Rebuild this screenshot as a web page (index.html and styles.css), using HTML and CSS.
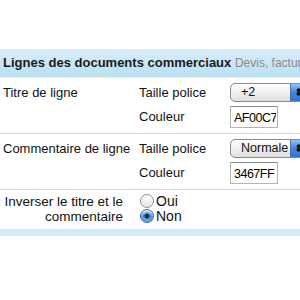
FILE: index.html
```html
<!DOCTYPE html>
<html lang="fr">
<head>
  <meta charset="UTF-8" />
  <title>Lignes des documents commerciaux</title>
  <link rel="stylesheet" href="styles.css">
</head>
<body>
  <div class="panel">
    <div class="panel-head">
      <span class="head-title">Lignes des documents commerciaux</span>
      <span class="head-sub">Devis, factures, bons de commande</span>
    </div>

    <div class="row">
      <div class="label">Titre de ligne</div>
      <div class="fields">
        <div class="field">
          <span class="field-name">Taille police</span>
          <div class="select"><span class="select-value">+2</span><span class="select-arrow">⬍</span></div>
        </div>
        <div class="field">
          <span class="field-name">Couleur</span>
          <input class="color-input" type="text" value="AF00C7">
        </div>
      </div>
    </div>

    <div class="row">
      <div class="label">Commentaire de ligne</div>
      <div class="fields">
        <div class="field">
          <span class="field-name">Taille police</span>
          <div class="select"><span class="select-value">Normale</span><span class="select-arrow">⬍</span></div>
        </div>
        <div class="field">
          <span class="field-name">Couleur</span>
          <input class="color-input" type="text" value="3467FF">
        </div>
      </div>
    </div>

    <div class="row row-last">
      <div class="label label-right">Inverser le titre et le commentaire</div>
      <div class="radios">
        <label class="radio"><span class="radio-dot"></span>Oui</label>
        <label class="radio"><span class="radio-dot checked"></span>Non</label>
      </div>
    </div>

    <div class="panel-foot"></div>
  </div>
</body>
</html>
```

FILE: styles.css
```css
body {
  margin: 0;
  background: #fff;
  font-family: "Liberation Sans", Arial, sans-serif;
  font-size: 13px;
  color: #111;
  overflow: hidden;
}

.panel {
  padding-top: 49px;
  width: 300px;
}

.panel-head {
  height: 28px;
  line-height: 28px;
  padding-left: 3px;
  white-space: nowrap;
  overflow: hidden;
  background: linear-gradient(#d9effa, #b8dff2);
  border-bottom: 1px solid #e4f1f8;
}

.head-title {
  font-weight: bold;
  font-size: 13px;
  color: #1a1a1a;
}

.head-sub {
  font-size: 12px;
  color: #8a8a8a;
}

.row {
  display: flex;
  border-bottom: 1px solid #dcdcdc;
  padding: 4px 0 6px;
}

.row-last {
  border-bottom: none;
  padding: 2px 0 5px;
}

.label {
  width: 139px;
  flex-shrink: 0;
  padding-left: 3px;
  box-sizing: border-box;
  line-height: 15px;
  padding-top: 3px;
  white-space: nowrap;
}

.label-right {
  width: 123px;
  margin-right: 17px;
  padding-left: 0;
  padding-top: 2px;
  text-align: right;
  white-space: normal;
  font-size: 13.5px;
}

.fields {
  display: flex;
  flex-direction: column;
  gap: 3px;
}

.field {
  display: flex;
  align-items: center;
  height: 21px;
}

.field-name {
  width: 91px;
}

.select {
  display: flex;
  align-items: stretch;
  width: 74px;
  height: 17px;
  border: 1px solid #8b8b8b;
  border-radius: 5px;
  background: linear-gradient(#ffffff, #f0f0f0 50%, #dedede);
  box-shadow: inset 0 1px 0 #fff;
  overflow: hidden;
  flex-shrink: 0;
}

.select-value {
  flex: 1;
  padding-left: 10px;
  line-height: 17px;
  font-size: 12.5px;
}

.select-arrow {
  width: 14px;
  text-align: center;
  font-size: 11px;
  line-height: 17px;
  color: #111;
  background: linear-gradient(#8fc3f5, #3f86e0 50%, #2f73d2);
  border-left: 1px solid #4a6fa0;
}

.color-input {
  width: 48px;
  height: 22px;
  box-sizing: border-box;
  margin: 0;
  padding: 2px 1px 0 3px;
  border: 1px solid #b4b4b4;
  border-top-color: #8e8e8e;
  font-family: "Liberation Sans", Arial, sans-serif;
  font-size: 12.5px;
  letter-spacing: -0.5px;
  color: #000;
  outline: none;
}

.radios {
  display: flex;
  flex-direction: column;
  padding-top: 2px;
  gap: 1px;
}

.radio {
  display: flex;
  align-items: center;
  gap: 2px;
  height: 14px;
  font-size: 14px;
}

.radio-dot {
  width: 12px;
  height: 12px;
  border-radius: 50%;
  border: 1px solid #8e8e8e;
  background: linear-gradient(#ffffff, #e3e3e3);
  box-shadow: inset 0 1px 1px #fff;
}

.radio-dot.checked {
  border-color: #3a68a8;
  background: radial-gradient(circle, #1c2c44 0 2.2px, transparent 2.8px),
              linear-gradient(#a9d0f7, #4a8fe0 55%, #6aaaf0);
}

.panel-foot {
  height: 7px;
  background: #d3ebf8;
}
```
